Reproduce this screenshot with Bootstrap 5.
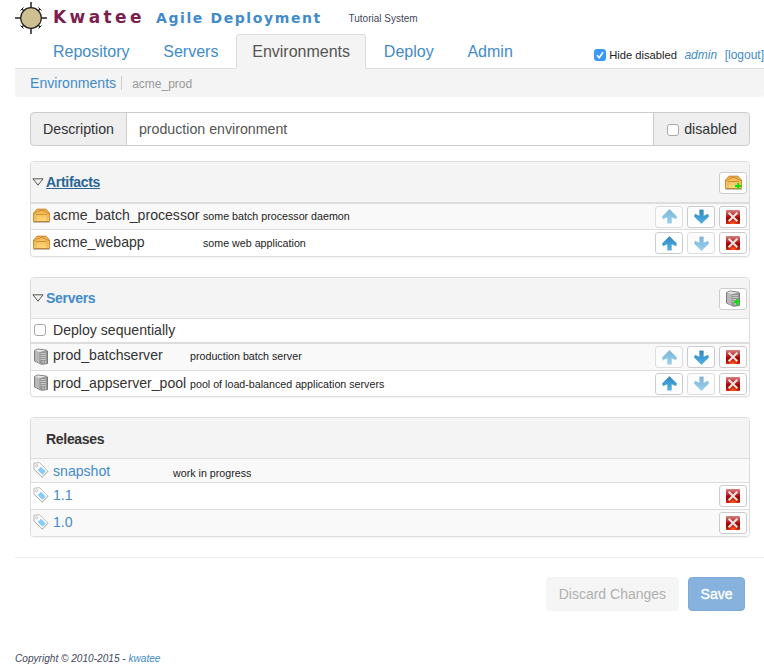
<!DOCTYPE html>
<html lang="en">
<head>
<meta charset="utf-8">
<meta name="viewport" content="width=device-width, initial-scale=1">
<title>Kwatee Agile Deployment</title>
<link href="https://cdn.jsdelivr.net/npm/bootstrap@5.3.0/dist/css/bootstrap.min.css" rel="stylesheet">
<style>
body{font-family:"Liberation Sans",Arial,sans-serif;font-size:14.1px;line-height:20px;color:#333;overflow:hidden}
a{color:#428bca;text-decoration:none}
svg{display:block;flex:none}
.page{padding-left:15px;height:664px}
.brandbar{height:34px}
.brand-name{font:700 17px/20px "DejaVu Sans",sans-serif;color:#7a1f4d;letter-spacing:3.4px;width:103px;margin-left:5px}
.brand-sub{font:700 14px/20px "DejaVu Sans",sans-serif;color:#428bca;letter-spacing:1.6px;width:192.500px;padding-top:1px}
.brand-sys{font-size:10px;color:#44475c}
.main-tabs{height:35px;border-bottom:1px solid #ddd;padding-left:22px;font-size:16px}
.main-tabs .nav-link{padding:7px 15px 0;height:35px;line-height:20px;color:#428bca;border-radius:4px 4px 0 0;margin-right:1.800px}
.main-tabs .nav-link.active{background:#f4f4f4;color:#555;border-color:#ddd #ddd #f4f4f4}
.session{font-size:12px;padding-top:7px}
.session label{font-size:11.2px;color:#222;margin-left:3px}
.session a{margin-left:7.500px}
.crumbs{height:28px;background:#f4f4f4;border-radius:0 0 4px 4px;padding-left:15px}
.crumbs .sep{width:1px;height:14px;background:#ccc;margin:0 10px 0 5px}
.crumbs .here{font-size:12px;color:#999;padding-top:1px}
.box{appearance:none;width:12px;height:12px;margin:0;border:1px solid #a9a9a9;border-radius:3px;background:#fff;flex:none}
.box-on{width:12px;height:12px;background:#3b99fc;border-radius:3px}
.content{padding:15px 14px 0 15px}
.desc{height:34px;margin-bottom:15px}
.desc .input-group-text{background:#eee;border-color:#ccc;font-size:14.200px;padding:2px 12px 0;color:#333;border-radius:4px}
.desc .input-group-text:last-child{padding-left:13px;gap:5px}
.desc .form-control{font-size:14.200px;color:#555;border-color:#ccc;padding:1px 12px 0}
.panel{border:1px solid #ddd;border-radius:4px;box-shadow:0 1px 1px rgba(0,0,0,.05);margin-bottom:20px;overflow:hidden;width:720px}
.panel-top{height:40px;background:#f4f4f4;padding:1px 2px 0 1px;font-weight:700;font-size:14px}
.panel-top .ttl{letter-spacing:-.3px}
.panel-top.plain{padding-left:15px}
.panel-top .tri{margin:0 2px 2px 0}
.panel-top .lead-link{padding-bottom:2px}
.line{border-top:1px solid #ddd;height:27px;padding:0 2px}
.line.first{border-top-width:2px}
.line.short{height:24px}
.line.tall{height:28px}
.line.last{height:26px}
.odd{background:#f9f9f9}
.line .ic{width:20px;padding-bottom:2px}
.line .ic.chk{padding:0 0 2px 1px}
.line .nm{padding-bottom:2px}
.line.first .nm{padding-bottom:4px}
.line .note{font-size:10.7px;color:#222}
.line.first .note{padding-bottom:2px}
.w-art{width:150px}.w-srv{width:137px}.w-rel{width:120px}
.tool{width:28px;height:22px;border:1px solid #ccc;border-radius:3px;background:#fff;padding:0;display:flex;align-items:center;justify-content:center}
.tool:disabled{border-color:#ddd;background:#fcfcfc;opacity:1}
.tool:disabled svg{opacity:.6}
.actions{border-top:1px solid #eee;padding:19px 19px 0 0;gap:9px}
.actions .btn{font-size:14px;height:34px;padding:0 11.500px;line-height:20px;border-radius:4px;opacity:1}
.actions .b-discard{padding:0 12px;background:#f5f5f5;color:#b0b0b0;border-color:#f5f5f5}
.actions .b-save{background:#86b2dd;color:#fff;border-color:#7eacd8;-webkit-text-stroke:.35px #fff}
.foot{font-size:10.100px;line-height:12px;font-style:italic;color:#44475c;margin-top:42px}
.hot,.hot:hover{color:#2a6496;text-decoration:underline}
</style>
</head>
<body>
<svg width="0" height="0" class="position-absolute">
<defs>
<linearGradient id="gBox" x2="0" y2="1"><stop stop-color="#f4b04c"/><stop offset="1" stop-color="#ffd97a"/></linearGradient>
<linearGradient id="gUp" x2="0" y2="1"><stop stop-color="#2f86bd"/><stop offset="1" stop-color="#4fb4ea"/></linearGradient>
<linearGradient id="gRed" x2="0" y2="1"><stop stop-color="#d98080"/><stop offset=".45" stop-color="#b51c1c"/><stop offset=".55" stop-color="#9c0505"/><stop offset="1" stop-color="#c81a08"/></linearGradient>
<radialGradient id="gHot" cx=".5" cy="1" r=".45"><stop stop-color="#ff6a20"/><stop offset="1" stop-color="#ff4010" stop-opacity="0"/></radialGradient>
<linearGradient id="gSrv"><stop stop-color="#c9c9c9"/><stop offset="1" stop-color="#999"/></linearGradient>
<symbol id="i-box" viewBox="0 0 17 15"><path d="M.6 13.500V5L4 1.200h9L16.400 5v8.500z" fill="url(#gBox)" stroke="#c88324"/><path d="M1 6l3.500-2.200L8.500 2.200l4 1.600L16 6M3 6.500h11" fill="none" stroke="#b97a22" stroke-width=".7"/><path d="M3 7v6M14 7v6" stroke="#d99a3c" stroke-width=".6"/><path d="M.2 14.300h16.600" stroke="#a59a8a" stroke-width=".8"/></symbol>
<symbol id="i-srv" viewBox="0 0 16 17"><path d="M1.500 2.500L5 1l8.500 1.200 1 .8v12.500l-6 .8L1.500 13z" fill="url(#gSrv)" stroke="#6f6f6f" stroke-width=".9"/><path d="M2 2.800L6.500 4.200v11.300L2 12.800z" fill="#b8b8b8"/><path d="M2 2.600L5 1.400 13 2.500 6.500 4z" fill="#e6e6e6"/><path d="M6.500 4.200L14 3.200v12L6.500 15.800z" fill="#969696"/><path d="M7.500 5.500h5.500M7.500 7.500h5.500M7.500 9.500h5.500M7.500 11.500h5.500" stroke="#ccc" stroke-width=".9"/><path d="M9.500 14h1.200M12 14h1.200" stroke="#fff"/></symbol>
<symbol id="i-plus" viewBox="0 0 6 6"><path d="M3 0v6M0 3h6" stroke="#0be00b" stroke-width="1.800"/></symbol>
<symbol id="i-up" viewBox="0 0 15 15"><path d="M7.500.300L14.800 7.600 14 10 9.500 8V14.200H5.500V8L1 10 .200 7.600z" fill="url(#gUp)" stroke="#3f97c8" stroke-width=".3"/></symbol>
<symbol id="i-down" viewBox="0 0 15 15"><path d="M7.500 14.700L14.800 7.400 14 5 9.500 7V.800H5.500V7L1 5 .200 7.400z" fill="url(#gUp)" stroke="#3f97c8" stroke-width=".3"/></symbol>
<symbol id="i-del" viewBox="0 0 14 14"><rect width="14" height="14" rx="1" fill="url(#gRed)"/><rect width="14" height="14" fill="url(#gHot)"/><path d="M3.400 3.400l7.200 7.200M10.600 3.400l-7.200 7.200" stroke="#e8e4e4" stroke-width="2.100" stroke-linecap="square"/></symbol>
<symbol id="i-tag" viewBox="0 0 16 16"><path d="M1 1.200L6.500.700 15 9.200 9.200 15.200.900 7z" fill="#fff" stroke="#b9b9b9"/><path d="M15 9.200L9.200 15.200.900 7" fill="none" stroke="#999" stroke-width=".8" stroke-dasharray="1 .6"/><circle cx="3.700" cy="3.800" r="1.200" fill="#fff" stroke="#b5b5b5" stroke-width=".8"/><path d="M8 4.800L12.800 9.500 9.500 12.800 4.700 8z" fill="#86ccfa"/></symbol>
<symbol id="i-tri" viewBox="0 0 12 8"><path d="M.900.800h10.200L6 7.200z" fill="#f0f0ec" stroke="#555"/></symbol>
</defs>
</svg>
<div class="page">
  <header class="brandbar d-flex align-items-center">
    <svg width="33" height="34" viewBox="0 0 33 34"><g stroke="#222" stroke-width="1.500"><path d="M16 2v32M0 18h32"/><path d="M7 9l18 18M25 9l-18 18" stroke-width="1.200"/><path d="M5.500 10.500l3-3M23.500 7.500l3 3M5.500 25.500l3 3M23.500 28.500l3-3" stroke-width="1"/></g><circle cx="16" cy="18" r="10.300" fill="#cfc093" stroke="#222" stroke-width="1.200"/></svg>
    <div class="brand-name">Kwatee</div>
    <div class="brand-sub text-nowrap">Agile Deployment</div>
    <div class="brand-sys pt-1">Tutorial System</div>
  </header>
  <nav class="d-flex justify-content-between main-tabs">
    <ul class="nav nav-tabs border-0 flex-nowrap">
      <li class="nav-item"><a class="nav-link" href="#">Repository</a></li>
      <li class="nav-item"><a class="nav-link" href="#">Servers</a></li>
      <li class="nav-item"><a class="nav-link active" href="#">Environments</a></li>
      <li class="nav-item"><a class="nav-link" href="#">Deploy</a></li>
      <li class="nav-item"><a class="nav-link" href="#">Admin</a></li>
    </ul>
    <div class="session d-flex align-items-center text-nowrap">
      <svg class="box-on" viewBox="0 0 12 12"><path d="M3 6.300l2.200 2.400L9 3.200" fill="none" stroke="#fff" stroke-width="1.600"/></svg>
      <label>Hide disabled</label>
      <a class="fst-italic" href="#">admin</a>
      <a href="#">[logout]</a>
    </div>
  </nav>
  <div class="crumbs d-flex align-items-center"><a href="#">Environments</a><span class="sep"></span><span class="here">acme_prod</span></div>

  <main class="content">
    <div class="input-group desc">
      <span class="input-group-text">Description</span>
      <input class="form-control" value="production environment">
      <span class="input-group-text"><input type="checkbox" class="box">disabled</span>
    </div>

    <section class="panel">
      <div class="panel-top d-flex align-items-center">
        <svg width="12" height="8" class="tri"><use href="#i-tri"/></svg><span class="lead-link flex-grow-1"><a class="ttl hot" href="#">Artifacts</a></span>
        <button class="tool"><svg width="17" height="15"><use href="#i-box"/><use href="#i-plus" x="10" y="8" width="6" height="6"/></svg></button>
      </div>
      <div class="line first odd d-flex align-items-center">
        <div class="ic"><svg width="17" height="15"><use href="#i-box"/></svg></div><div class="w-art nm">acme_batch_processor</div><div class="note flex-grow-1">some batch processor daemon</div>
        <div class="d-flex gap-1"><button class="tool" disabled><svg width="15" height="15"><use href="#i-up"/></svg></button><button class="tool"><svg width="15" height="15"><use href="#i-down"/></svg></button><button class="tool"><svg width="14" height="14"><use href="#i-del"/></svg></button></div>
      </div>
      <div class="line d-flex align-items-center">
        <div class="ic"><svg width="17" height="15"><use href="#i-box"/></svg></div><div class="w-art nm">acme_webapp</div><div class="note flex-grow-1">some web application</div>
        <div class="d-flex gap-1"><button class="tool"><svg width="15" height="15"><use href="#i-up"/></svg></button><button class="tool" disabled><svg width="15" height="15"><use href="#i-down"/></svg></button><button class="tool"><svg width="14" height="14"><use href="#i-del"/></svg></button></div>
      </div>
    </section>

    <section class="panel">
      <div class="panel-top d-flex align-items-center">
        <svg width="12" height="8" class="tri"><use href="#i-tri"/></svg><span class="lead-link flex-grow-1"><a class="ttl" href="#">Servers</a></span>
        <button class="tool"><svg width="16" height="17"><use href="#i-srv"/><use href="#i-plus" x="9" y="9" width="6" height="6"/></svg></button>
      </div>
      <div class="line short d-flex align-items-center"><div class="ic chk"><input type="checkbox" class="box d-block"></div><div class="nm">Deploy sequentially</div></div>
      <div class="line first tall odd d-flex align-items-center">
        <div class="ic"><svg width="16" height="17"><use href="#i-srv"/></svg></div><div class="w-srv nm">prod_batchserver</div><div class="note flex-grow-1">production batch server</div>
        <div class="d-flex gap-1"><button class="tool" disabled><svg width="15" height="15"><use href="#i-up"/></svg></button><button class="tool"><svg width="15" height="15"><use href="#i-down"/></svg></button><button class="tool"><svg width="14" height="14"><use href="#i-del"/></svg></button></div>
      </div>
      <div class="line last d-flex align-items-center">
        <div class="ic"><svg width="16" height="17"><use href="#i-srv"/></svg></div><div class="w-srv nm">prod_appserver_pool</div><div class="note flex-grow-1">pool of load-balanced application servers</div>
        <div class="d-flex gap-1"><button class="tool"><svg width="15" height="15"><use href="#i-up"/></svg></button><button class="tool" disabled><svg width="15" height="15"><use href="#i-down"/></svg></button><button class="tool"><svg width="14" height="14"><use href="#i-del"/></svg></button></div>
      </div>
    </section>

    <section class="panel">
      <div class="panel-top plain d-flex align-items-center"><span class="ttl">Releases</span></div>
      <div class="line short odd d-flex align-items-center"><div class="ic"><svg width="16" height="16"><use href="#i-tag"/></svg></div><a class="w-rel" href="#">snapshot</a><div class="note pt-1">work in progress</div></div>
      <div class="line d-flex align-items-center"><div class="ic"><svg width="16" height="16"><use href="#i-tag"/></svg></div><a class="flex-grow-1 nm" href="#">1.1</a><button class="tool"><svg width="14" height="14"><use href="#i-del"/></svg></button></div>
      <div class="line odd d-flex align-items-center"><div class="ic"><svg width="16" height="16"><use href="#i-tag"/></svg></div><a class="flex-grow-1 nm" href="#">1.0</a><button class="tool"><svg width="14" height="14"><use href="#i-del"/></svg></button></div>
    </section>
  </main>
  <div class="actions d-flex justify-content-end"><button class="btn b-discard" disabled>Discard Changes</button><button class="btn b-save" disabled>Save</button></div>
  <footer class="foot">Copyright © 2010-2015 - <a href="#">kwatee</a></footer>
</div>
<script src="https://cdn.jsdelivr.net/npm/bootstrap@5.3.0/dist/js/bootstrap.bundle.min.js"></script>
</body>
</html>
